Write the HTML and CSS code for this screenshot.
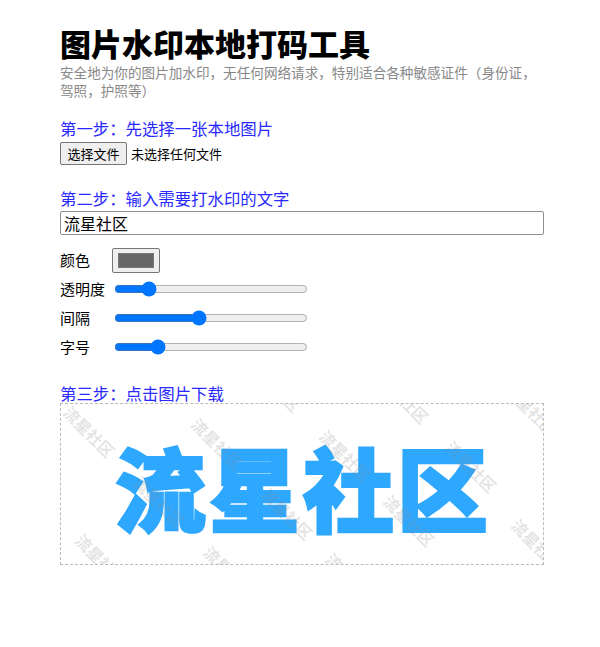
FILE: index.html
```html
<!DOCTYPE html>
<html lang="zh-CN">
<head>
<meta charset="utf-8">
<title>图片水印本地打码工具</title>
<link rel="stylesheet" href="styles.css">
</head>
<body>
<main class="page">
  <h1 class="title">图片水印本地打码工具</h1>
  <p class="subtitle">安全地为你的图片加水印，无任何网络请求，特别适合各种敏感证件（身份证，驾照，护照等）</p>

  <h2 class="step step-1">第一步：先选择一张本地图片</h2>
  <div class="file-row">
    <button class="file-btn" type="button">选择文件</button>
    <span class="file-name">未选择任何文件</span>
  </div>

  <h2 class="step step-2">第二步：输入需要打水印的文字</h2>
  <input class="text-input" type="text" value="流星社区">

  <div class="controls">
    <div class="row row-color">
      <span class="label">颜色</span>
      <span class="color-box"><span class="swatch"></span></span>
    </div>
    <div class="row">
      <span class="label">透明度</span>
      <input class="range" type="range" min="0" max="100" value="15">
    </div>
    <div class="row">
      <span class="label">间隔</span>
      <input class="range" type="range" min="0" max="100" value="43">
    </div>
    <div class="row">
      <span class="label">字号</span>
      <input class="range" type="range" min="0" max="100" value="20">
    </div>
  </div>

  <h2 class="step step-3">第三步：点击图片下载</h2>
  <div class="canvas">
    <svg class="art" width="482" height="160" viewBox="0 0 482 160" xmlns="http://www.w3.org/2000/svg">
      <text class="big" x="242" y="81" text-anchor="middle" dominant-baseline="central">流星社区</text>
      <g class="wm" text-anchor="middle" dominant-baseline="central">
        <text transform="translate(-41.5 -42.5) rotate(45)">流星社区</text>
        <text transform="translate(86.5 -30.5) rotate(45)">流星社区</text>
        <text transform="translate(28.5 27.5) rotate(45)">流星社区</text>
        <text transform="translate(-29.5 85.5) rotate(45)">流星社区</text>
        <text transform="translate(214.5 -18.5) rotate(45)">流星社区</text>
        <text transform="translate(156.5 39.5) rotate(45)">流星社区</text>
        <text transform="translate(98.5 97.5) rotate(45)">流星社区</text>
        <text transform="translate(40.5 155.5) rotate(45)">流星社区</text>
        <text transform="translate(342.5 -6.5) rotate(45)">流星社区</text>
        <text transform="translate(284.5 51.5) rotate(45)">流星社区</text>
        <text transform="translate(226.5 109.5) rotate(45)">流星社区</text>
        <text transform="translate(168.5 167.5) rotate(45)">流星社区</text>
        <text transform="translate(470.5 5.5) rotate(45)">流星社区</text>
        <text transform="translate(410.5 62.5) rotate(45)">流星社区</text>
        <text transform="translate(348.5 116.5) rotate(45)">流星社区</text>
        <text transform="translate(290.5 174.5) rotate(45)">流星社区</text>
        <text transform="translate(476.5 140.5) rotate(45)">流星社区</text>
        <text transform="translate(418.5 198.5) rotate(45)">流星社区</text>
      </g>
    </svg>
  </div>
</main>
</body>
</html>
```

FILE: styles.css
```css
html, body {
  margin: 0;
  padding: 0;
  background: #fff;
}

body {
  font-family: "Noto Sans CJK SC", "Noto Sans", "Liberation Sans", sans-serif;
  color: #000;
}

.page {
  width: 484px;
  padding: 24px 0 40px 60px;
}

.title {
  margin: 0;
  font-size: 31px;
  line-height: 37px;
  font-weight: 900;
}

.subtitle {
  margin: 2px 0 0;
  font-size: 13.6px;
  line-height: 18px;
  color: #888;
}

.step {
  margin: 0;
  font-size: 16.4px;
  line-height: 20px;
  font-weight: normal;
  color: #2828ff;
}

.step-1 { margin-top: 19px; }
.step-2 { margin-top: 23px; }
.step-3 { margin-top: 22px; }

.file-row {
  display: flex;
  align-items: center;
  margin-top: 4px;
  height: 23px;
}

.file-btn {
  box-sizing: border-box;
  height: 23px;
  width: 67px;
  margin: 0;
  padding: 0;
  font-family: inherit;
  font-size: 13px;
  line-height: 21px;
  color: #000;
  background: #efefef;
  border: 1px solid #767676;
  border-radius: 2px;
}

.file-name {
  margin-left: 4px;
  font-size: 13px;
  line-height: 18px;
}

.text-input {
  display: block;
  box-sizing: border-box;
  width: 484px;
  height: 24px;
  margin: 3px 0 0;
  padding: 0 3px;
  font-family: inherit;
  font-size: 16px;
  line-height: 22px;
  color: #000;
  border: 1px solid #8f8f8f;
  border-radius: 2px;
  outline: none;
}

.controls {
  margin-top: 11px;
}

.row {
  display: flex;
  align-items: center;
  height: 29px;
}

.row-color {
  height: 28px;
}

.label {
  width: 52px;
  flex: none;
  font-size: 15px;
  line-height: 20px;
}

.color-box {
  box-sizing: border-box;
  display: flex;
  width: 48px;
  height: 25px;
  padding: 4px 5px;
  background: #efefef;
  border: 1px solid #767676;
  border-radius: 2px;
}

.swatch {
  flex: 1;
  background: #666;
  border: 1px solid #777;
}

.range {
  width: 194px;
  margin: 0 0 0 2px;
  accent-color: #0075ff;
}

.canvas {
  width: 482px;
  height: 160px;
  border: 1px dashed #bbb;
  overflow: hidden;
}

.art {
  display: block;
}

.big {
  font-family: "Noto Sans CJK SC", sans-serif;
  font-size: 91px;
  font-weight: 900;
  letter-spacing: 3px;
  fill: #2ea8ff;
  stroke: #2ea8ff;
  stroke-width: 2.5px;
  stroke-linejoin: miter;
}

.wm text {
  font-family: "Noto Sans CJK SC", sans-serif;
  font-size: 16px;
  font-weight: 700;
  fill: #888;
  fill-opacity: 0.24;
}
```
